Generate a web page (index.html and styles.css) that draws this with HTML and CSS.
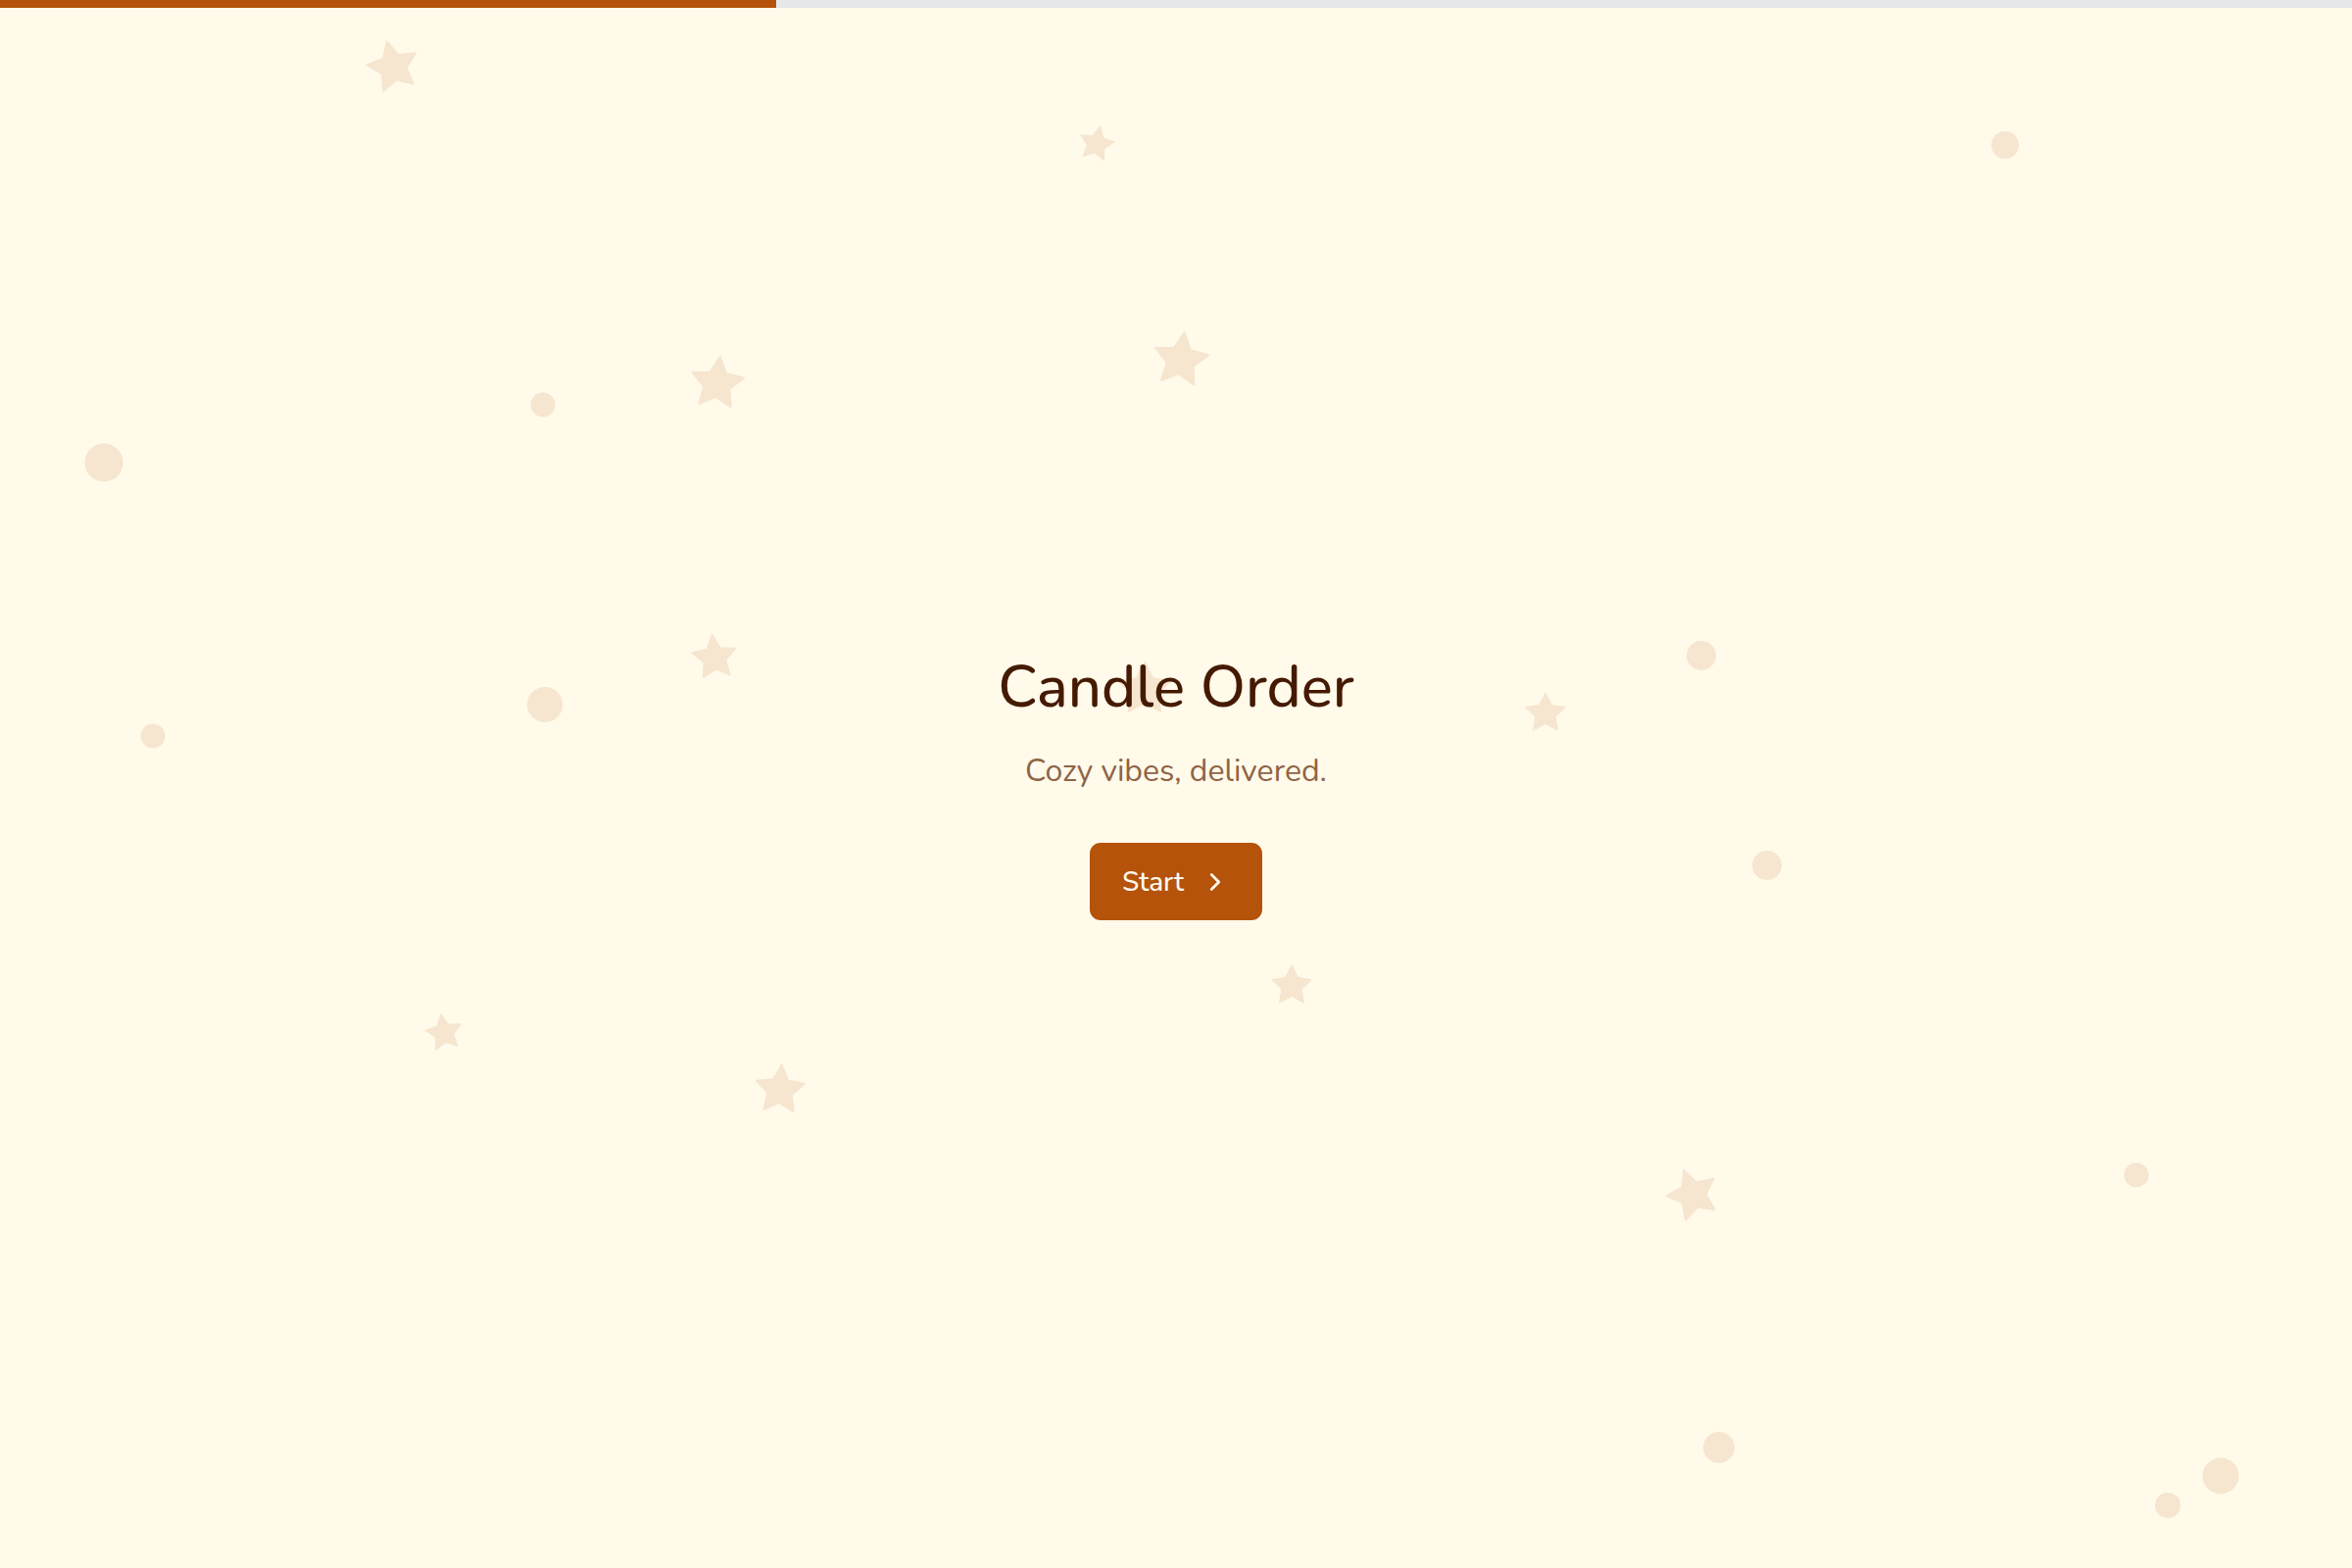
FILE: index.html
```html
<!DOCTYPE html>
<html lang="en">
<head>
<meta charset="utf-8">
<title>Candle Order</title>
<link rel="stylesheet" href="styles.css">
</head>
<body>
<div class="progress"><div class="progress-fill" style="width:33%"></div></div>

<div class="sky" aria-hidden="true">
  <svg class="star" style="--x:401px;--y:67px;--s:62px;--r:-14deg" viewBox="0 0 24 24"><polygon points="12,2 15.09,8.26 22,9.27 17,14.14 18.18,21.02 12,17.77 5.82,21.02 7,14.14 2,9.27 8.91,8.26"/></svg>
  <svg class="star" style="--x:1119px;--y:146px;--s:42px;--r:12deg" viewBox="0 0 24 24"><polygon points="12,2 15.09,8.26 22,9.27 17,14.14 18.18,21.02 12,17.77 5.82,21.02 7,14.14 2,9.27 8.91,8.26"/></svg>
  <svg class="star" style="--x:1205px;--y:366px;--s:66px;--r:8deg" viewBox="0 0 24 24"><polygon points="12,2 15.09,8.26 22,9.27 17,14.14 18.18,21.02 12,17.77 5.82,21.02 7,14.14 2,9.27 8.91,8.26"/></svg>
  <svg class="star" style="--x:732px;--y:390px;--s:64px;--r:6deg" viewBox="0 0 24 24"><polygon points="12,2 15.09,8.26 22,9.27 17,14.14 18.18,21.02 12,17.77 5.82,21.02 7,14.14 2,9.27 8.91,8.26"/></svg>
  <svg class="star" style="--x:729px;--y:670px;--s:54px;--r:-6deg" viewBox="0 0 24 24"><polygon points="12,2 15.09,8.26 22,9.27 17,14.14 18.18,21.02 12,17.77 5.82,21.02 7,14.14 2,9.27 8.91,8.26"/></svg>
  <svg class="star" style="--x:1168px;--y:702px;--s:64px;--r:0deg" viewBox="0 0 24 24"><polygon points="12,2 15.09,8.26 22,9.27 17,14.14 18.18,21.02 12,17.77 5.82,21.02 7,14.14 2,9.27 8.91,8.26"/></svg>
  <svg class="star" style="--x:1577px;--y:727px;--s:48px;--r:0deg" viewBox="0 0 24 24"><polygon points="12,2 15.09,8.26 22,9.27 17,14.14 18.18,21.02 12,17.77 5.82,21.02 7,14.14 2,9.27 8.91,8.26"/></svg>
  <svg class="star" style="--x:1318px;--y:1005px;--s:48px;--r:0deg" viewBox="0 0 24 24"><polygon points="12,2 15.09,8.26 22,9.27 17,14.14 18.18,21.02 12,17.77 5.82,21.02 7,14.14 2,9.27 8.91,8.26"/></svg>
  <svg class="star" style="--x:453px;--y:1053px;--s:44px;--r:-10deg" viewBox="0 0 24 24"><polygon points="12,2 15.09,8.26 22,9.27 17,14.14 18.18,21.02 12,17.77 5.82,21.02 7,14.14 2,9.27 8.91,8.26"/></svg>
  <svg class="star" style="--x:796px;--y:1111px;--s:60px;--r:4deg" viewBox="0 0 24 24"><polygon points="12,2 15.09,8.26 22,9.27 17,14.14 18.18,21.02 12,17.77 5.82,21.02 7,14.14 2,9.27 8.91,8.26"/></svg>
  <svg class="star" style="--x:1727px;--y:1218px;--s:62px;--r:-20deg" viewBox="0 0 24 24"><polygon points="12,2 15.09,8.26 22,9.27 17,14.14 18.18,21.02 12,17.77 5.82,21.02 7,14.14 2,9.27 8.91,8.26"/></svg>

  <span class="dot" style="--x:2046px;--y:148px;--s:28px"></span>
  <span class="dot" style="--x:554px;--y:413px;--s:25px"></span>
  <span class="dot" style="--x:106px;--y:472px;--s:39px"></span>
  <span class="dot" style="--x:156px;--y:751px;--s:25px"></span>
  <span class="dot" style="--x:556px;--y:719px;--s:36px"></span>
  <span class="dot" style="--x:1736px;--y:669px;--s:30px"></span>
  <span class="dot" style="--x:1803px;--y:883px;--s:30px"></span>
  <span class="dot" style="--x:2180px;--y:1199px;--s:25px"></span>
  <span class="dot" style="--x:1754px;--y:1477px;--s:32px"></span>
  <span class="dot" style="--x:2212px;--y:1536px;--s:26px"></span>
  <span class="dot" style="--x:2266px;--y:1506px;--s:37px"></span>
</div>

<main class="hero">
  <h1 class="title">Candle Order</h1>
  <p class="tagline">Cozy vibes, delivered.</p>
  <button class="start" type="button">
    <span>Start</span>
    <svg class="chev" viewBox="0 0 24 24" fill="none" stroke="currentColor" stroke-width="2.2" stroke-linecap="round" stroke-linejoin="round"><path d="M9 6l6 6-6 6"/></svg>
  </button>
</main>
</body>
</html>
```

FILE: styles.css
```css
html, body {
  margin: 0;
  height: 100%;
}

body {
  background: #fffaea;
  font-family: "Nunito", "Lato", "Noto Sans", sans-serif;
  overflow: hidden;
  position: relative;
}

.progress {
  position: absolute;
  top: 0;
  left: 0;
  right: 0;
  height: 8px;
  background: #e5e7eb;
  z-index: 2;
}

.progress-fill {
  height: 100%;
  background: #b45309;
}

/* decorative backdrop of stars and dots */
.sky {
  position: absolute;
  inset: 0;
  pointer-events: none;
  z-index: 0;
}

.star,
.dot {
  position: absolute;
  left: var(--x);
  top: var(--y);
  width: var(--s);
  height: var(--s);
  transform: translate(-50%, -50%) rotate(var(--r, 0deg));
}

.star polygon {
  fill: #f6e5cf;
  stroke: #f6e5cf;
  stroke-width: 0.6;
  stroke-linejoin: round;
}

.dot {
  border-radius: 50%;
  background: #f6e5cf;
}

.hero {
  position: relative;
  z-index: 1;
  box-sizing: border-box;
  height: 100%;
  padding-top: 4px;
  display: flex;
  flex-direction: column;
  align-items: center;
  justify-content: center;
}

.title {
  margin: 0;
  font-size: 60px;
  font-weight: 500;
  line-height: 72px;
  color: #451a03;
}

.tagline {
  margin: 29px 0 0;
  font-size: 32px;
  line-height: 42px;
  color: #8f6446;
}

.start {
  margin-top: 52px;
  display: flex;
  align-items: center;
  gap: 17px;
  height: 79px;
  padding: 0 33px 0 33px;
  border: 0;
  border-radius: 11px;
  background: #b45309;
  color: #fff8ef;
  font-family: inherit;
  font-size: 28px;
  font-weight: 500;
  cursor: pointer;
}

.chev {
  width: 30px;
  height: 30px;
}
```
